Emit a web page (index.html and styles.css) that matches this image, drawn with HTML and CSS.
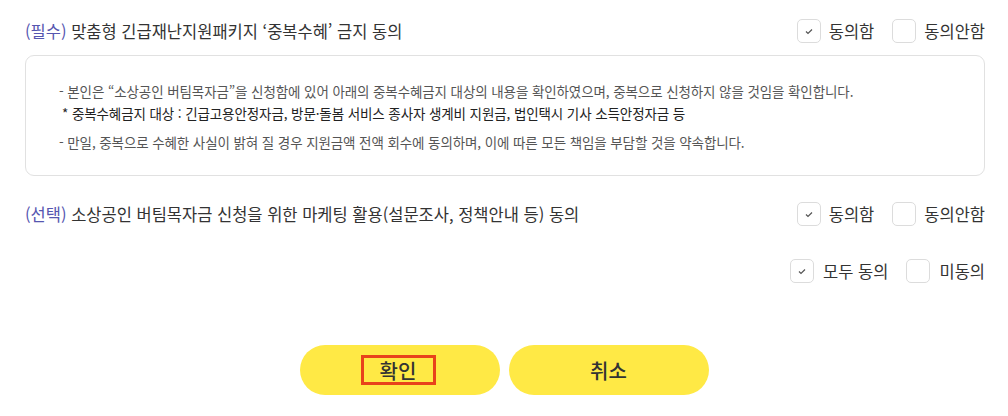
FILE: index.html
```html
<!DOCTYPE html>
<html lang="ko">
<head>
<meta charset="utf-8">
<title>동의</title>
<link rel="stylesheet" href="styles.css">
</head>
<body>
<div class="page">
  <div class="row row-first">
    <div class="title"><span class="tag">(필수)</span> 맞춤형 긴급재난지원패키지 ‘중복수혜’ 금지 동의</div>
    <div class="opts">
      <label class="opt"><span class="box checked"><svg viewBox="0 0 24 24" width="24" height="24"><polyline points="9,12.5 11,14.5 15,10.5" fill="none" stroke="#555" stroke-width="1.2"/></svg></span><span class="lbl">동의함</span></label>
      <label class="opt"><span class="box"></span><span class="lbl">동의안함</span></label>
    </div>
  </div>
  <div class="notice">
    <p class="line">- 본인은 “소상공인 버팀목자금”을 신청함에 있어 아래의 중복수혜금지 대상의 내용을 확인하였으며, 중복으로 신청하지 않을 것임을 확인합니다.</p>
    <p class="line sub">* 중복수혜금지 대상 : 긴급고용안정자금, 방문·돌봄 서비스 종사자 생계비 지원금, 법인택시 기사 소득안정자금 등</p>
    <p class="line gap">- 만일, 중복으로 수혜한 사실이 밝혀 질 경우 지원금액 전액 회수에 동의하며, 이에 따른 모든 책임을 부담할 것을 약속합니다.</p>
  </div>
  <div class="row row-second">
    <div class="title"><span class="tag">(선택)</span> 소상공인 버팀목자금 신청을 위한 마케팅 활용(설문조사, 정책안내 등) 동의</div>
    <div class="opts">
      <label class="opt"><span class="box checked"><svg viewBox="0 0 24 24" width="24" height="24"><polyline points="9,12.5 11,14.5 15,10.5" fill="none" stroke="#555" stroke-width="1.2"/></svg></span><span class="lbl">동의함</span></label>
      <label class="opt"><span class="box"></span><span class="lbl">동의안함</span></label>
    </div>
  </div>
  <div class="row row-all">
    <div class="opts">
      <label class="opt wide"><span class="box checked"><svg viewBox="0 0 24 24" width="24" height="24"><polyline points="9,12.5 11,14.5 15,10.5" fill="none" stroke="#555" stroke-width="1.2"/></svg></span><span class="lbl">모두 동의</span></label>
      <label class="opt wide"><span class="box"></span><span class="lbl">미동의</span></label>
    </div>
  </div>
  <div class="buttons">
    <button class="btn"><span class="focus">확인</span></button>
    <button class="btn">취소</button>
  </div>
</div>
</body>
</html>
```

FILE: styles.css
```css
* { box-sizing: border-box; }
html, body { margin: 0; padding: 0; background: #fff; }
body {
  font-family: "Noto Sans CJK KR", "Noto Sans", sans-serif;
  color: #333;
  width: 1008px;
  height: 416px;
  overflow: hidden;
}
.page { padding: 19px 23px 0 25px; }
.row { display: flex; align-items: center; justify-content: space-between; height: 24px; }
.title { font-size: 16.5px; letter-spacing: 0; color: #333; }
.tag { color: #5656b0; }
.opts { display: flex; align-items: center; margin-left: auto; }
.opt { display: flex; align-items: center; font-size: 16.5px; color: #333; }
.opt + .opt { margin-left: 18px; }
.box {
  width: 24px; height: 24px;
  border: 1px solid #dcdcdc; border-radius: 5px;
  background: #fff;
  display: flex; align-items: center; justify-content: center;
  margin-right: 8px;
}
.box svg { display: block; margin: -1px; }
.wide .box { margin-right: 9px; }
.notice {
  margin-top: 12px;
  border: 1px solid #e1e1e1;
  border-radius: 9px;
  padding: 24px 20px 24px 33px;
  height: 121px;
}
.line { margin: 0; font-size: 13.5px; line-height: 22px; color: #555; letter-spacing: -0.1px; }
.line.sub { padding-left: 3px; color: #222; }
.line.gap { margin-top: 7px; }
.row-second { margin-top: 26px; }
.row-all { margin-top: 33px; }
.buttons { display: flex; justify-content: center; gap: 9px; margin-top: 62px; padding-right: 2px; }
.btn {
  width: 200px; height: 50px;
  border: none; border-radius: 25px;
  background: #ffe945;
  font-family: "Noto Sans CJK KR", sans-serif;
  font-size: 20px; font-weight: 500; color: #333;
  display: flex; align-items: center; justify-content: center;
  padding: 0;
}
.focus {
  display: flex; align-items: center; justify-content: center;
  width: 75px; height: 30px;
  border: 3px solid #e8421b;
  margin-left: -3px;
}
```
